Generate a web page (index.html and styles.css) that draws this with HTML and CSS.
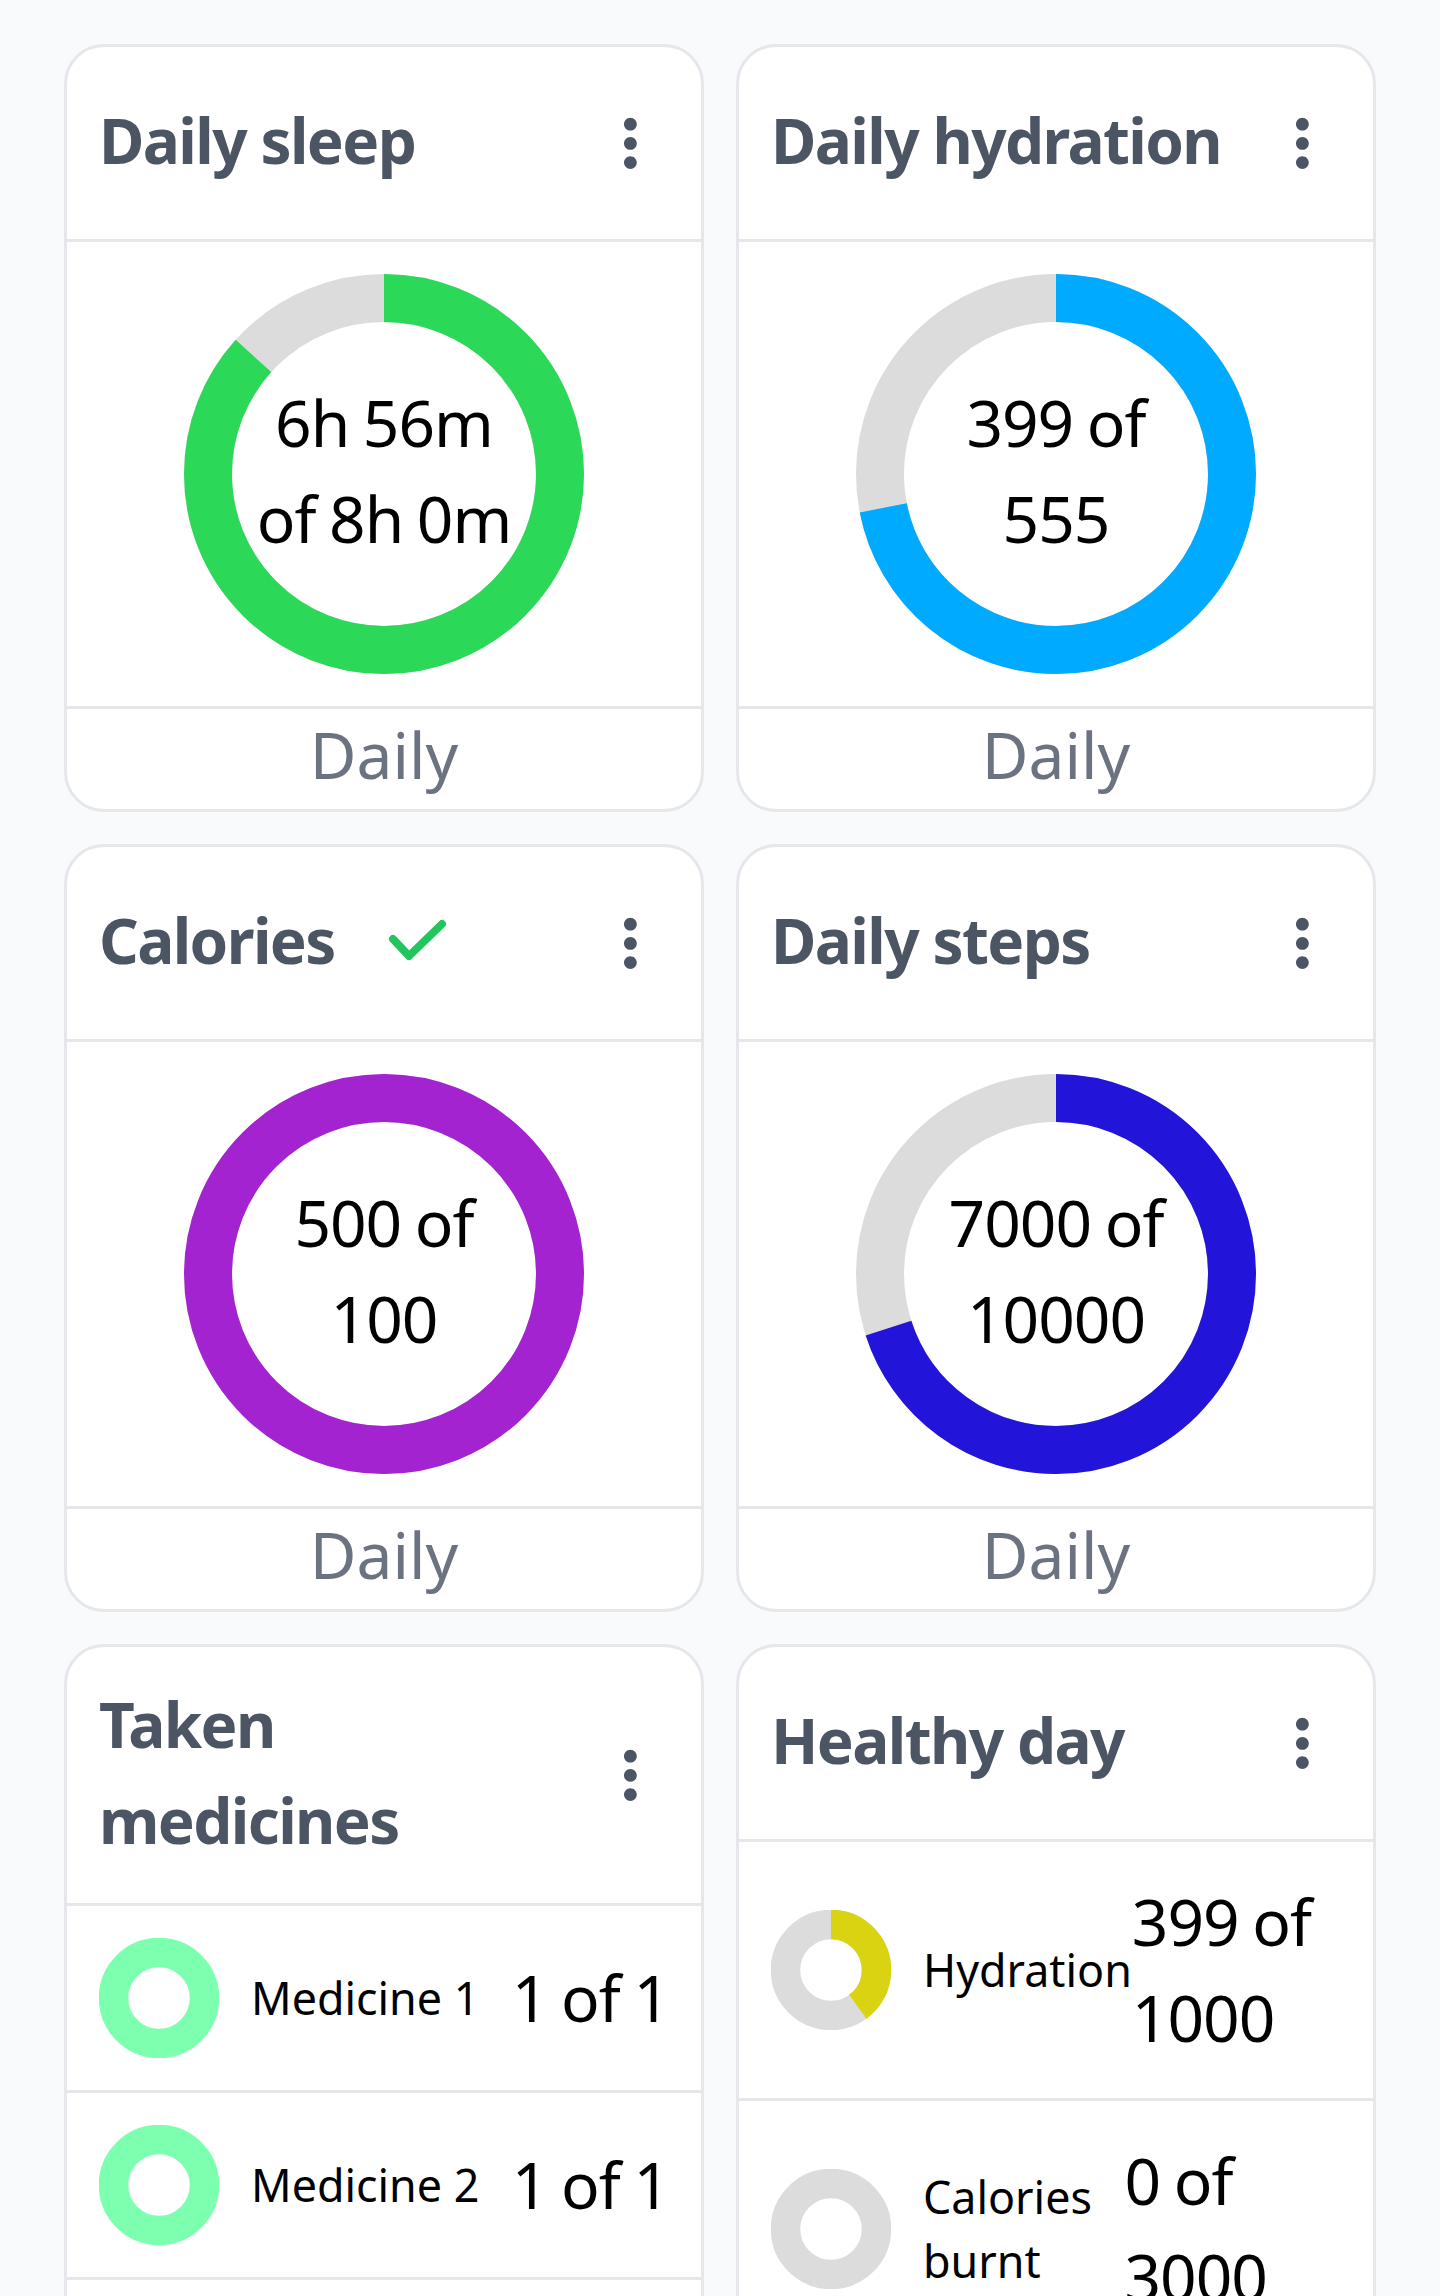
FILE: index.html
```html
<!DOCTYPE html>
<html lang="en">
<head>
<meta charset="utf-8">
<title>Health dashboard</title>
<link rel="stylesheet" href="styles.css">
</head>
<body>
<main class="grid">

  <section class="card">
    <header class="card-head">
      <h2 class="card-title">Daily sleep</h2>
      <button class="menu" aria-label="More"><svg viewBox="0 0 24 24"><path d="M12 8c1.1 0 2-.9 2-2s-.9-2-2-2-2 .9-2 2 .9 2 2 2zm0 2c-1.1 0-2 .9-2 2s.9 2 2 2 2-.9 2-2-.9-2-2-2zm0 6c-1.1 0-2 .9-2 2s.9 2 2 2 2-.9 2-2-.9-2-2-2z"/></svg></button>
    </header>
    <div class="card-body">
      <div class="donut">
        <svg viewBox="0 0 400 400">
          <circle class="track" cx="200" cy="200" r="176"/>
          <circle class="bar bar-green" cx="200" cy="200" r="176" stroke-dasharray="958.4 1200"/>
        </svg>
        <p class="donut-text">6h 56m of 8h 0m</p>
      </div>
    </div>
    <footer class="card-foot">Daily</footer>
  </section>

  <section class="card">
    <header class="card-head">
      <h2 class="card-title">Daily hydration</h2>
      <button class="menu" aria-label="More"><svg viewBox="0 0 24 24"><path d="M12 8c1.1 0 2-.9 2-2s-.9-2-2-2-2 .9-2 2 .9 2 2 2zm0 2c-1.1 0-2 .9-2 2s.9 2 2 2 2-.9 2-2-.9-2-2-2zm0 6c-1.1 0-2 .9-2 2s.9 2 2 2 2-.9 2-2-.9-2-2-2z"/></svg></button>
    </header>
    <div class="card-body">
      <div class="donut">
        <svg viewBox="0 0 400 400">
          <circle class="track" cx="200" cy="200" r="176"/>
          <circle class="bar bar-blue" cx="200" cy="200" r="176" stroke-dasharray="795.0 1200"/>
        </svg>
        <p class="donut-text">399 of 555</p>
      </div>
    </div>
    <footer class="card-foot">Daily</footer>
  </section>

  <section class="card">
    <header class="card-head">
      <h2 class="card-title">Calories
        <svg class="check" viewBox="0 0 64 48"><polyline points="8,23 24,40 57,8"/></svg>
      </h2>
      <button class="menu" aria-label="More"><svg viewBox="0 0 24 24"><path d="M12 8c1.1 0 2-.9 2-2s-.9-2-2-2-2 .9-2 2 .9 2 2 2zm0 2c-1.1 0-2 .9-2 2s.9 2 2 2 2-.9 2-2-.9-2-2-2zm0 6c-1.1 0-2 .9-2 2s.9 2 2 2 2-.9 2-2-.9-2-2-2z"/></svg></button>
    </header>
    <div class="card-body">
      <div class="donut">
        <svg viewBox="0 0 400 400">
          <circle class="track" cx="200" cy="200" r="176"/>
          <circle class="bar bar-purple" cx="200" cy="200" r="176"/>
        </svg>
        <p class="donut-text">500 of 100</p>
      </div>
    </div>
    <footer class="card-foot">Daily</footer>
  </section>

  <section class="card">
    <header class="card-head">
      <h2 class="card-title">Daily steps</h2>
      <button class="menu" aria-label="More"><svg viewBox="0 0 24 24"><path d="M12 8c1.1 0 2-.9 2-2s-.9-2-2-2-2 .9-2 2 .9 2 2 2zm0 2c-1.1 0-2 .9-2 2s.9 2 2 2 2-.9 2-2-.9-2-2-2zm0 6c-1.1 0-2 .9-2 2s.9 2 2 2 2-.9 2-2-.9-2-2-2z"/></svg></button>
    </header>
    <div class="card-body">
      <div class="donut">
        <svg viewBox="0 0 400 400">
          <circle class="track" cx="200" cy="200" r="176"/>
          <circle class="bar bar-navy" cx="200" cy="200" r="176" stroke-dasharray="774.1 1200"/>
        </svg>
        <p class="donut-text">7000 of 10000</p>
      </div>
    </div>
    <footer class="card-foot">Daily</footer>
  </section>

  <section class="card">
    <header class="card-head">
      <h2 class="card-title card-title-narrow">Taken medicines</h2>
      <button class="menu" aria-label="More"><svg viewBox="0 0 24 24"><path d="M12 8c1.1 0 2-.9 2-2s-.9-2-2-2-2 .9-2 2 .9 2 2 2zm0 2c-1.1 0-2 .9-2 2s.9 2 2 2 2-.9 2-2-.9-2-2-2zm0 6c-1.1 0-2 .9-2 2s.9 2 2 2 2-.9 2-2-.9-2-2-2z"/></svg></button>
    </header>
    <ul class="list">
      <li class="row">
        <svg class="ring" viewBox="0 0 120 120"><circle class="ring-bar ring-mint" cx="60" cy="60" r="45.5"/></svg>
        <span class="row-label">Medicine 1</span>
        <span class="row-value row-value-end">1 of 1</span>
      </li>
      <li class="row">
        <svg class="ring" viewBox="0 0 120 120"><circle class="ring-bar ring-mint" cx="60" cy="60" r="45.5"/></svg>
        <span class="row-label">Medicine 2</span>
        <span class="row-value row-value-end">1 of 1</span>
      </li>
    </ul>
    <footer class="card-foot">Daily</footer>
  </section>

  <section class="card">
    <header class="card-head">
      <h2 class="card-title">Healthy day</h2>
      <button class="menu" aria-label="More"><svg viewBox="0 0 24 24"><path d="M12 8c1.1 0 2-.9 2-2s-.9-2-2-2-2 .9-2 2 .9 2 2 2zm0 2c-1.1 0-2 .9-2 2s.9 2 2 2 2-.9 2-2-.9-2-2-2zm0 6c-1.1 0-2 .9-2 2s.9 2 2 2 2-.9 2-2-.9-2-2-2z"/></svg></button>
    </header>
    <ul class="list">
      <li class="row row-tall">
        <svg class="ring" viewBox="0 0 120 120">
          <circle class="ring-track" cx="60" cy="60" r="45.5"/>
          <circle class="ring-bar ring-yellow" cx="60" cy="60" r="45.5" stroke-dasharray="114.1 300"/>
        </svg>
        <span class="row-label row-label-shrink">Hydration</span>
        <span class="row-value">399 of 1000</span>
      </li>
      <li class="row row-tall">
        <svg class="ring" viewBox="0 0 120 120">
          <circle class="ring-track" cx="60" cy="60" r="45.5"/>
        </svg>
        <span class="row-label row-label-shrink">Calories burnt</span>
        <span class="row-value">0 of 3000</span>
      </li>
    </ul>
  </section>

</main>
</body>
</html>
```

FILE: styles.css
```css
* {
  box-sizing: border-box;
}

html, body {
  margin: 0;
  padding: 0;
}

body {
  background: #f9fafb;
  font-family: "Noto Sans", "Open Sans", sans-serif;
  color: #000;
}

.grid {
  display: grid;
  grid-template-columns: 640px 640px;
  column-gap: 32px;
  row-gap: 32px;
  padding: 44px 64px 0;
  align-items: start;
}

.card {
  background: #fff;
  border: 3.2px solid #e5e7eb;
  border-radius: 40px;
  overflow: hidden;
  height: 768px;
}

.card-head {
  display: flex;
  align-items: center;
  justify-content: space-between;
  padding: 32px 32px;
  border-bottom: 3.2px solid #e5e7eb;
}

.card-title {
  margin: -3px 0 3px;
  display: flex;
  align-items: center;
  font-size: 62px;
  line-height: 96px;
  font-weight: 700;
  color: #4b5563;
  letter-spacing: -1.6px;
}

.card-title-narrow {
  max-width: 380px;
  display: block;
}

.check {
  width: 64px;
  height: 48px;
  margin-left: 50px;
  fill: none;
  stroke: #22c55e;
  stroke-width: 8;
  stroke-linecap: round;
  stroke-linejoin: round;
}

.menu {
  flex: none;
  width: 76.8px;
  height: 128px;
  padding: 0;
  border: 0;
  background: none;
  display: flex;
  align-items: center;
  justify-content: center;
}

.menu svg {
  width: 76.8px;
  height: 76.8px;
  fill: #4b5563;
}

.card-body {
  padding: 32px;
  display: flex;
  justify-content: center;
  border-bottom: 3.2px solid #e5e7eb;
}

.donut {
  width: 400px;
  height: 400px;
  display: grid;
  place-items: center;
}

.donut > svg,
.donut > .donut-text {
  grid-area: 1 / 1;
}

.donut > svg {
  width: 400px;
  height: 400px;
  transform: rotate(-90deg);
}

.track,
.bar {
  fill: none;
  stroke-width: 48;
}

.track {
  stroke: #dcdcdc;
}

.bar-green { stroke: #2bd858; }
.bar-blue { stroke: #00aaff; }
.bar-purple { stroke: #a323d0; }
.bar-navy { stroke: #2214d8; }

.donut-text {
  margin: -3px 0 3px;
  width: 270px;
  text-align: center;
  font-size: 64px;
  line-height: 96px;
  letter-spacing: -1px;
  word-spacing: -2px;
  color: #000;
}

.card-foot {
  text-align: center;
  font-size: 64px;
  line-height: 96px;
  color: #6b7280;
  margin-top: -2px;
}

.list {
  list-style: none;
  margin: 0;
  padding: 0;
}

.row {
  display: flex;
  align-items: center;
  padding: 32px;
  border-bottom: 3.2px solid #e5e7eb;
}

.ring {
  flex: none;
  width: 120px;
  height: 120px;
  margin-right: 32px;
  transform: rotate(-90deg);
}

.ring-track,
.ring-bar {
  fill: none;
  stroke-width: 29.5;
}

.ring-track { stroke: #dcdcdc; }
.ring-mint { stroke: #7dffb0; }
.ring-yellow { stroke: #d9d312; }

.row-label {
  font-size: 44.8px;
  line-height: 64px;
  color: #000;
  flex: 1 1 auto;
}

.row-label-shrink {
  flex: 0 1.8 auto;
}

.row-value {
  font-size: 64px;
  line-height: 96px;
  letter-spacing: -1px;
  word-spacing: -2px;
  color: #000;
  flex: 0 1 auto;
}

.row-value-end {
  flex: none;
}
```
